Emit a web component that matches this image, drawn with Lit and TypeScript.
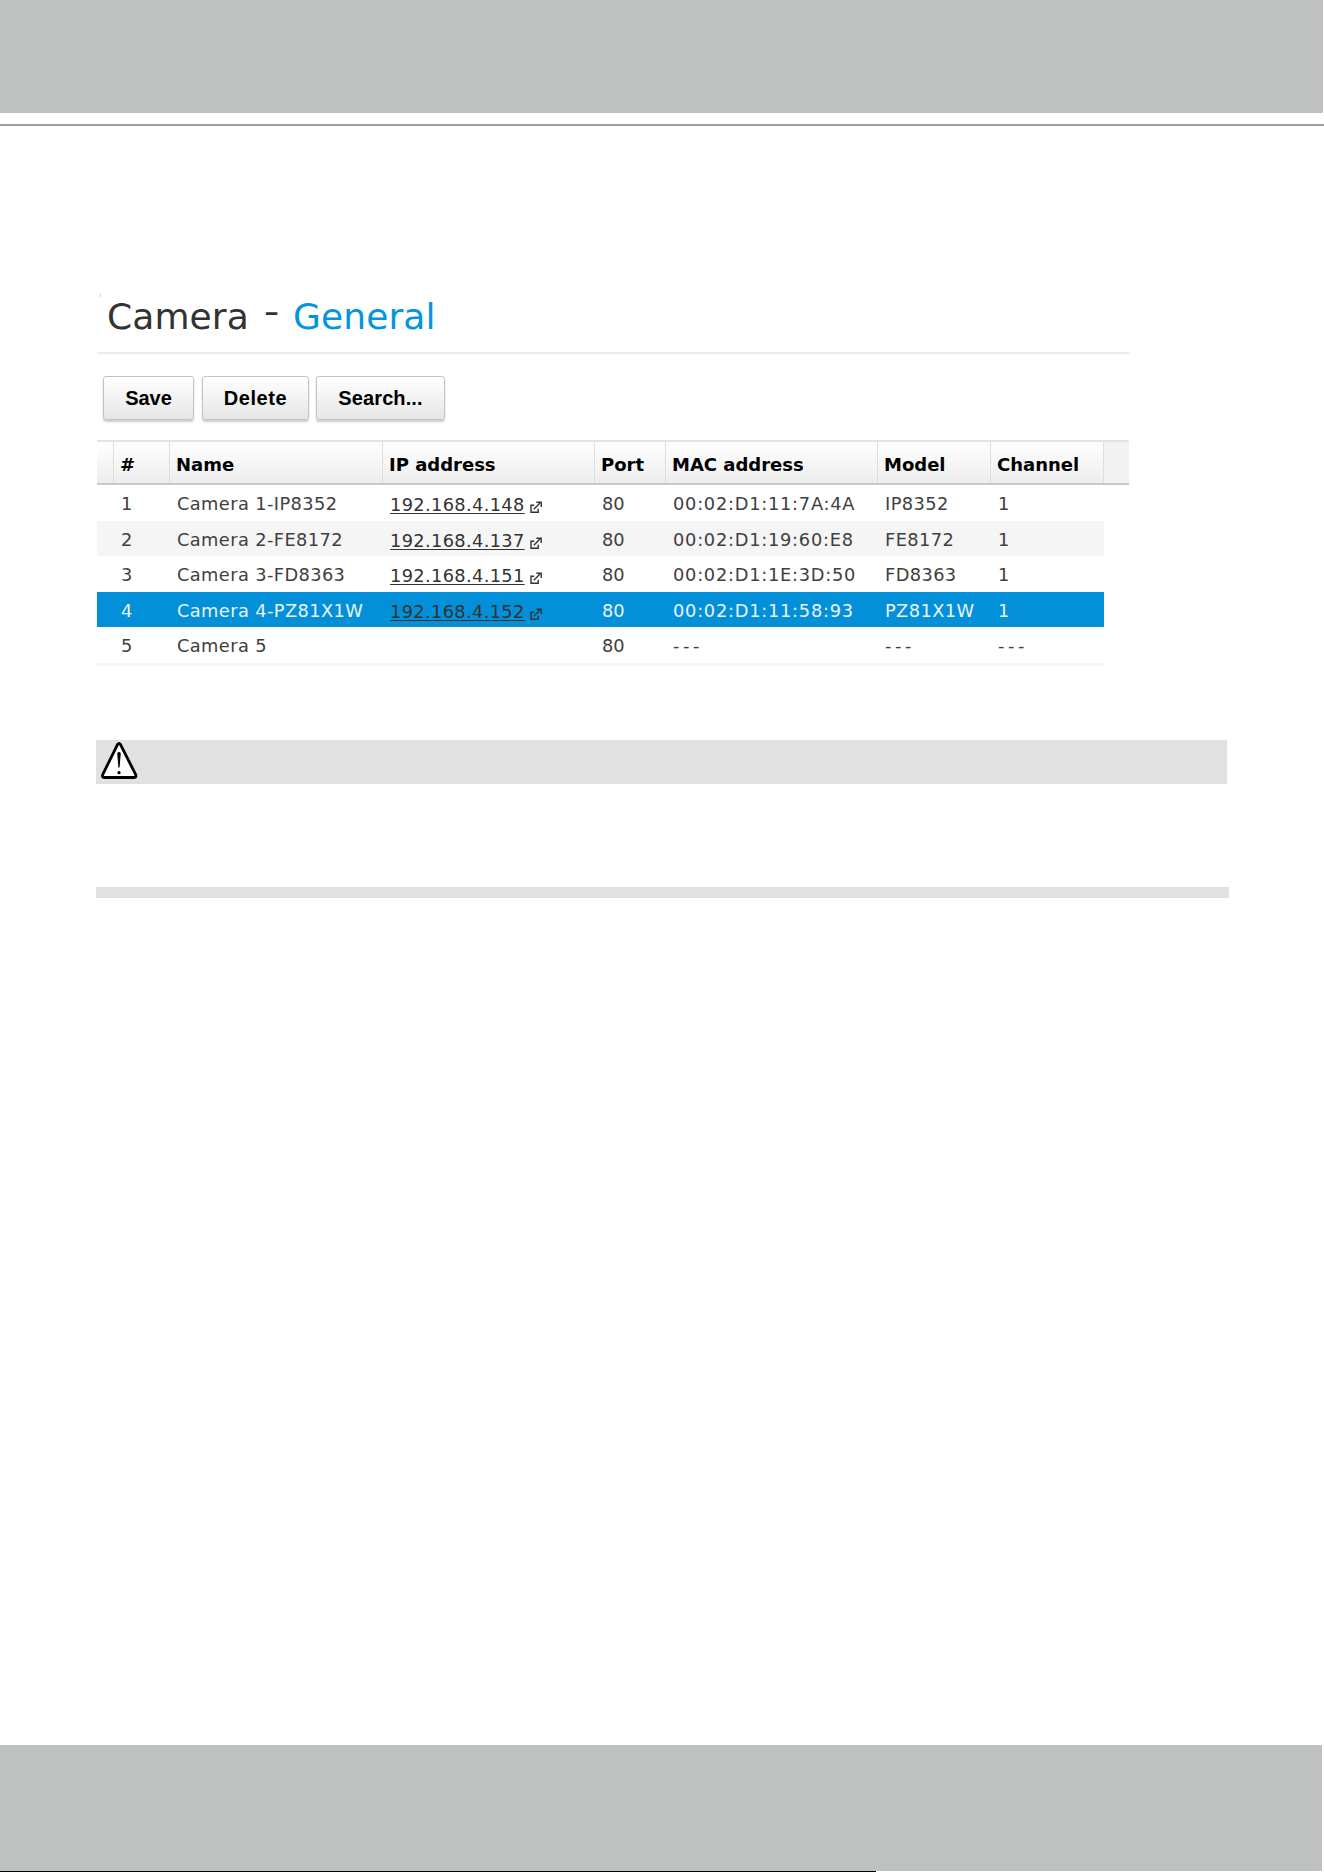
import { LitElement, html, css, nothing } from 'lit';
import { customElement, state } from 'lit/decorators.js';
import { classMap } from 'lit/directives/class-map.js';

interface Camera {
  id: number;
  name: string;
  ip: string;
  port: number;
  mac: string;
  model: string;
  channel: string;
}

const CAMERAS: Camera[] = [
  { id: 1, name: 'Camera 1-IP8352', ip: '192.168.4.148', port: 80, mac: '00:02:D1:11:7A:4A', model: 'IP8352', channel: '1' },
  { id: 2, name: 'Camera 2-FE8172', ip: '192.168.4.137', port: 80, mac: '00:02:D1:19:60:E8', model: 'FE8172', channel: '1' },
  { id: 3, name: 'Camera 3-FD8363', ip: '192.168.4.151', port: 80, mac: '00:02:D1:1E:3D:50', model: 'FD8363', channel: '1' },
  { id: 4, name: 'Camera 4-PZ81X1W', ip: '192.168.4.152', port: 80, mac: '00:02:D1:11:58:93', model: 'PZ81X1W', channel: '1' },
  { id: 5, name: 'Camera 5', ip: '', port: 80, mac: '---', model: '---', channel: '---' },
];

const COLUMNS = ['', '#', 'Name', 'IP address', 'Port', 'MAC address', 'Model', 'Channel', ''];

@customElement('camera-table')
class CameraTable extends LitElement {
  static styles = css`
    :host {
      display: block;
      width: 1032px;
      font-family: Verdana, "DejaVu Sans", sans-serif;
      font-size: 17.8px;
      color: #404040;
    }

    .head,
    .row {
      display: grid;
      grid-template-columns: 17px 56px 213px 212px 71px 212px 113px 113px 25px;
      white-space: nowrap;
    }

    .head {
      box-sizing: border-box;
      height: 45px;
      border-top: 2px solid #e2e3e3;
      border-bottom: 2px solid #c8c8c8;
      background: linear-gradient(#fff, #ededed);
      color: #000;
      font-size: 18px;
      font-weight: bold;
    }

    .head div {
      box-sizing: border-box;
      height: 41px;
      border-right: 1px solid #dedede;
      padding-left: 6px;
      line-height: 45px;
    }

    .head div:last-child {
      border-right: none;
      background: #f2f2f2;
    }

    .row {
      width: 1007px;
      height: 35.5px;
      line-height: 37px;
      grid-template-columns: 17px 56px 213px 212px 71px 212px 113px 113px;
    }

    .row div {
      height: 35.5px;
      padding-left: 7px;
    }

    .row:nth-child(odd) {
      background: #f5f5f5;
    }

    .row.selected {
      background: #048fd9;
      color: #e8f4fc;
    }

    .row .name {
      letter-spacing: 0.4px;
    }

    .row .ip {
      line-height: 39px;
    }

    .row .mac {
      letter-spacing: 0.75px;
    }

    .row .model {
      letter-spacing: 0.4px;
    }

    .row .blank {
      letter-spacing: 3.6px;
    }

    a {
      color: #333;
      letter-spacing: 0.35px;
      text-decoration: underline;
      text-decoration-thickness: 1px;
      text-underline-offset: 2px;
    }

    .ext {
      width: 12px;
      height: 12px;
      margin-left: 5px;
      vertical-align: -2px;
    }

    .end {
      width: 1007px;
      height: 3px;
      background: #f5f5f5;
    }
  `;

  @state() selected = 4;

  renderLink(ip: string) {
    if (!ip) return nothing;
    return html`<a>${ip}</a><svg class="ext" viewBox="0 0 12 12" fill="none" stroke="#333" stroke-width="1.4">
      <path d="M4.2 4.2H1V11.3H8.2V7.8M3.8 8.2L10 2" />
      <path d="M6.4 1.2H11.2V6" />
    </svg>`;
  }

  renderRow(cam: Camera) {
    const blank = cam.mac === '---';
    return html`
      <div class=${classMap({ row: true, selected: cam.id === this.selected })} @click=${() => (this.selected = cam.id)}>
        <div></div>
        <div>${cam.id}</div>
        <div class="name">${cam.name}</div>
        <div class="ip">${this.renderLink(cam.ip)}</div>
        <div>${cam.port}</div>
        <div class=${classMap({ mac: true, blank })}>${cam.mac}</div>
        <div class=${classMap({ model: true, blank })}>${cam.model}</div>
        <div class=${classMap({ blank })}>${cam.channel}</div>
      </div>
    `;
  }

  render() {
    return html`
      <div class="head">${COLUMNS.map((c) => html`<div>${c}</div>`)}</div>
      ${CAMERAS.map((cam) => this.renderRow(cam))}
      <div class="end"></div>
    `;
  }
}

@customElement('app-root')
class AppRoot extends LitElement {
  static styles = css`
    :host {
      display: flex;
      flex-direction: column;
      height: 1872px;
      background: #fff;
      overflow: hidden;
      font-family: Verdana, "DejaVu Sans", sans-serif;
    }

    .top {
      width: 1323px;
      height: 113px;
      background: #bfc1c0;
    }

    .line {
      height: 2px;
      margin-top: 11px;
      background: #a0a0a0;
    }

    main {
      flex: 1;
      padding: 166px 0 0 97px;
    }

    h1 {
      position: relative;
      box-sizing: border-box;
      width: 1032px;
      height: 62px;
      margin: 0;
      padding-left: 10px;
      border-bottom: 2px solid #ebebeb;
      font-size: 36px;
      font-weight: normal;
      line-height: 49px;
      letter-spacing: 0.1px;
      color: #333;
      white-space: nowrap;
    }

    /* small tick above the heading */
    h1::before {
      content: "";
      position: absolute;
      left: 3px;
      top: 2px;
      width: 1px;
      height: 3px;
      background: #ccc;
    }

    .dash {
      display: inline-block;
      margin: 0 15px 0 16px;
      line-height: 30px;
      vertical-align: 6px;
      transform: scaleX(1.2);
    }

    .section {
      color: #0595df;
    }

    .buttons {
      display: flex;
      gap: 7px;
      padding: 22px 0 20px 6px;
    }

    button {
      box-sizing: border-box;
      height: 44px;
      padding: 0;
      border: 1px solid #c4c4c4;
      border-radius: 3px;
      background: linear-gradient(#fff, #e6e6e6);
      box-shadow: 0 2px 2px rgba(0, 0, 0, 0.2);
      font: bold 20px/36px Arial, "Liberation Sans", sans-serif;
      color: #000;
    }

    .save {
      width: 91px;
    }

    .delete {
      width: 107px;
      margin-left: 1px;
      letter-spacing: 0.6px;
    }

    .search {
      width: 129px;
      letter-spacing: 0.1px;
    }

    .note {
      display: flex;
      align-items: flex-start;
      width: 1131px;
      height: 44px;
      margin: 74px 0 0 -1px;
      background: #e1e1e1;
    }

    .warn {
      width: 38px;
      height: 38px;
      margin: 2px 0 0 4px;
    }

    .note-end {
      width: 1133px;
      height: 11px;
      margin: 103px 0 0 -1px;
      background: #e1e1e1;
    }

    .bottom {
      width: 1322px;
      height: 126px;
      background: #bfc1c0;
    }

    .edge {
      width: 876px;
      height: 1px;
      background: #000;
    }
  `;

  render() {
    return html`
      <div class="top"></div>
      <div class="line"></div>
      <main>
        <h1>Camera<span class="dash">-</span><span class="section">General</span></h1>
        <div class="buttons">
          <button class="save">Save</button>
          <button class="delete">Delete</button>
          <button class="search">Search...</button>
        </div>
        <camera-table></camera-table>
        <div class="note">
          <svg class="warn" viewBox="0 0 38 38">
            <path d="M20.4 2.4L35.7 32.6Q36.6 35.5 34.2 35.5H4.2Q1.8 35.5 2.7 32.6L17.6 2.4Q19 0.4 20.4 2.4Z" fill="#fff" stroke="#000" stroke-width="2.8" stroke-linejoin="round" />
            <path d="M17.2 11Q19 9 20.8 11L19.6 25.5H18.4Z" />
            <circle cx="19" cy="30.7" r="1.6" />
          </svg>
        </div>
        <div class="note-end"></div>
      </main>
      <div class="bottom"></div>
      <div class="edge"></div>
    `;
  }
}
